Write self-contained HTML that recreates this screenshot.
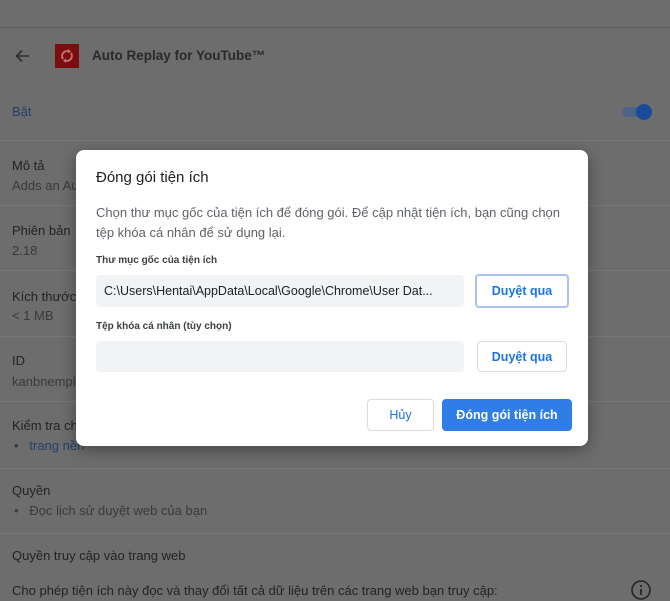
<!DOCTYPE html>
<html><head><meta charset="utf-8"><style>
*{margin:0;padding:0;box-sizing:border-box}
body{width:670px;height:600px;overflow:hidden;background:#6d6d6d;font-family:"Liberation Sans",Arial,sans-serif;position:relative;color:#232323}
.a{position:absolute;white-space:nowrap}
.hl{position:absolute;left:0;width:670px;height:1px;background:#787878}
.t{font-size:13px}
.s{font-size:13px;color:#3a3a3a}
.dlg{position:absolute;left:76px;top:150px;width:512px;height:296px;background:#fff;border-radius:8px;box-shadow:0 4px 16px rgba(0,0,0,.35)}
.btn{position:absolute;border:1px solid #dadce0;border-radius:4px;background:#fff;color:#1a73e8;font-weight:bold;font-size:12.5px;display:flex;align-items:center;justify-content:center}
.inp{position:absolute;left:20px;width:368px;background:#f1f3f4;border-radius:4px;font-size:12.5px;color:#202124;padding-left:8px;display:flex;align-items:center}
.lbl{position:absolute;left:20px;font-size:10px;color:#3c4043;font-weight:bold}
</style></head><body>
<div class="hl" style="top:27px;background:#5e5e5e"></div>
<svg class="a" style="left:14px;top:48px" width="16" height="16" viewBox="0 0 16 16"><path d="M15 8H3M8 2.5L2.5 8 8 13.5" stroke="#2e2e2e" stroke-width="1.6" fill="none"/></svg>
<div class="a" style="left:55px;top:44px;width:24px;height:24px;background:#7a0d0d"></div>
<svg class="a" style="left:57px;top:46px" width="20" height="20" viewBox="0 0 20 20"><path d="M6 13A5 5 0 0 1 12 5.5M14 7A5 5 0 0 1 8 14.5" stroke="#c07070" stroke-width="2" fill="none"/><path d="M11 3l3 2.5-3 2z M9 17l-3-2.5 3-2z" fill="#c07070"/></svg>
<div class="a" style="left:92px;top:48px;font-size:13.5px;font-weight:bold;color:#2a2a2a">Auto Replay for YouTube™</div>
<div class="a" style="left:12px;top:104px;font-size:13px;color:#243f70">Bật</div>
<div class="a" style="left:622px;top:107px;width:24px;height:10px;border-radius:5px;background:#4a6586"></div>
<div class="a" style="left:636px;top:104px;width:16px;height:16px;border-radius:8px;background:#1a4a9a"></div>
<div class="hl" style="top:140px"></div>
<div class="a t" style="left:12px;top:158px">Mô tả</div>
<div class="a s" style="left:12px;top:178px">Adds an Au</div>
<div class="hl" style="top:205px"></div>
<div class="a t" style="left:12px;top:223px">Phiên bản</div>
<div class="a s" style="left:12px;top:243px">2.18</div>
<div class="hl" style="top:270px"></div>
<div class="a t" style="left:12px;top:289px">Kích thước</div>
<div class="a s" style="left:12px;top:308px">&lt; 1 MB</div>
<div class="hl" style="top:336px"></div>
<div class="a t" style="left:12px;top:353px">ID</div>
<div class="a s" style="left:12px;top:374px">kanbnempl</div>
<div class="hl" style="top:401px"></div>
<div class="a t" style="left:12px;top:418px">Kiểm tra ch</div>
<div class="a s" style="left:14px;top:438px">•&nbsp;&nbsp;&nbsp;<span style="color:#243f70">trang nền</span></div>
<div class="hl" style="top:468px"></div>
<div class="a t" style="left:12px;top:483px">Quyền</div>
<div class="a s" style="left:14px;top:503px">•&nbsp;&nbsp;&nbsp;Đọc lịch sử duyệt web của bạn</div>
<div class="hl" style="top:533px"></div>
<div class="a t" style="left:12px;top:548px">Quyền truy cập vào trang web</div>
<div class="a t" style="left:12px;top:583px">Cho phép tiện ích này đọc và thay đổi tất cả dữ liệu trên các trang web bạn truy cập:</div>
<svg class="a" style="left:630px;top:579px" width="22" height="22" viewBox="0 0 22 22"><circle cx="11" cy="11" r="9" stroke="#262626" stroke-width="1.6" fill="none"/><path d="M11 10v6" stroke="#262626" stroke-width="1.8"/><circle cx="11" cy="7" r="1.1" fill="#262626"/></svg>

<div class="dlg">
<div class="a" style="left:20px;top:19px;font-size:15px;color:#202124">Đóng gói tiện ích</div>
<div class="a" style="left:20px;top:53px;font-size:13px;color:#5f6368;line-height:20px">Chọn thư mục gốc của tiện ích để đóng gói. Để cập nhật tiện ích, bạn cũng chọn<br>tệp khóa cá nhân để sử dụng lại.</div>
<div class="lbl" style="top:105px">Thư mục gốc của tiện ích</div>
<div class="inp" style="top:125px;height:32px">C:\Users\Hentai\AppData\Local\Google\Chrome\User Dat...</div>
<div class="btn" style="left:399px;top:124px;width:94px;height:34px;border:2px solid #a8c3ec">Duyệt qua</div>
<div class="lbl" style="top:171px">Tệp khóa cá nhân (tùy chọn)</div>
<div class="inp" style="top:191px;height:31px"></div>
<div class="btn" style="left:401px;top:191px;width:90px;height:31px">Duyệt qua</div>
<div class="btn" style="left:291px;top:249px;width:67px;height:32px;font-weight:normal">Hủy</div>
<div class="btn" style="left:366px;top:249px;width:130px;height:32px;background:#2f7de6;border-color:#2f7de6;color:#fff">Đóng gói tiện ích</div>
</div>
</body></html>
